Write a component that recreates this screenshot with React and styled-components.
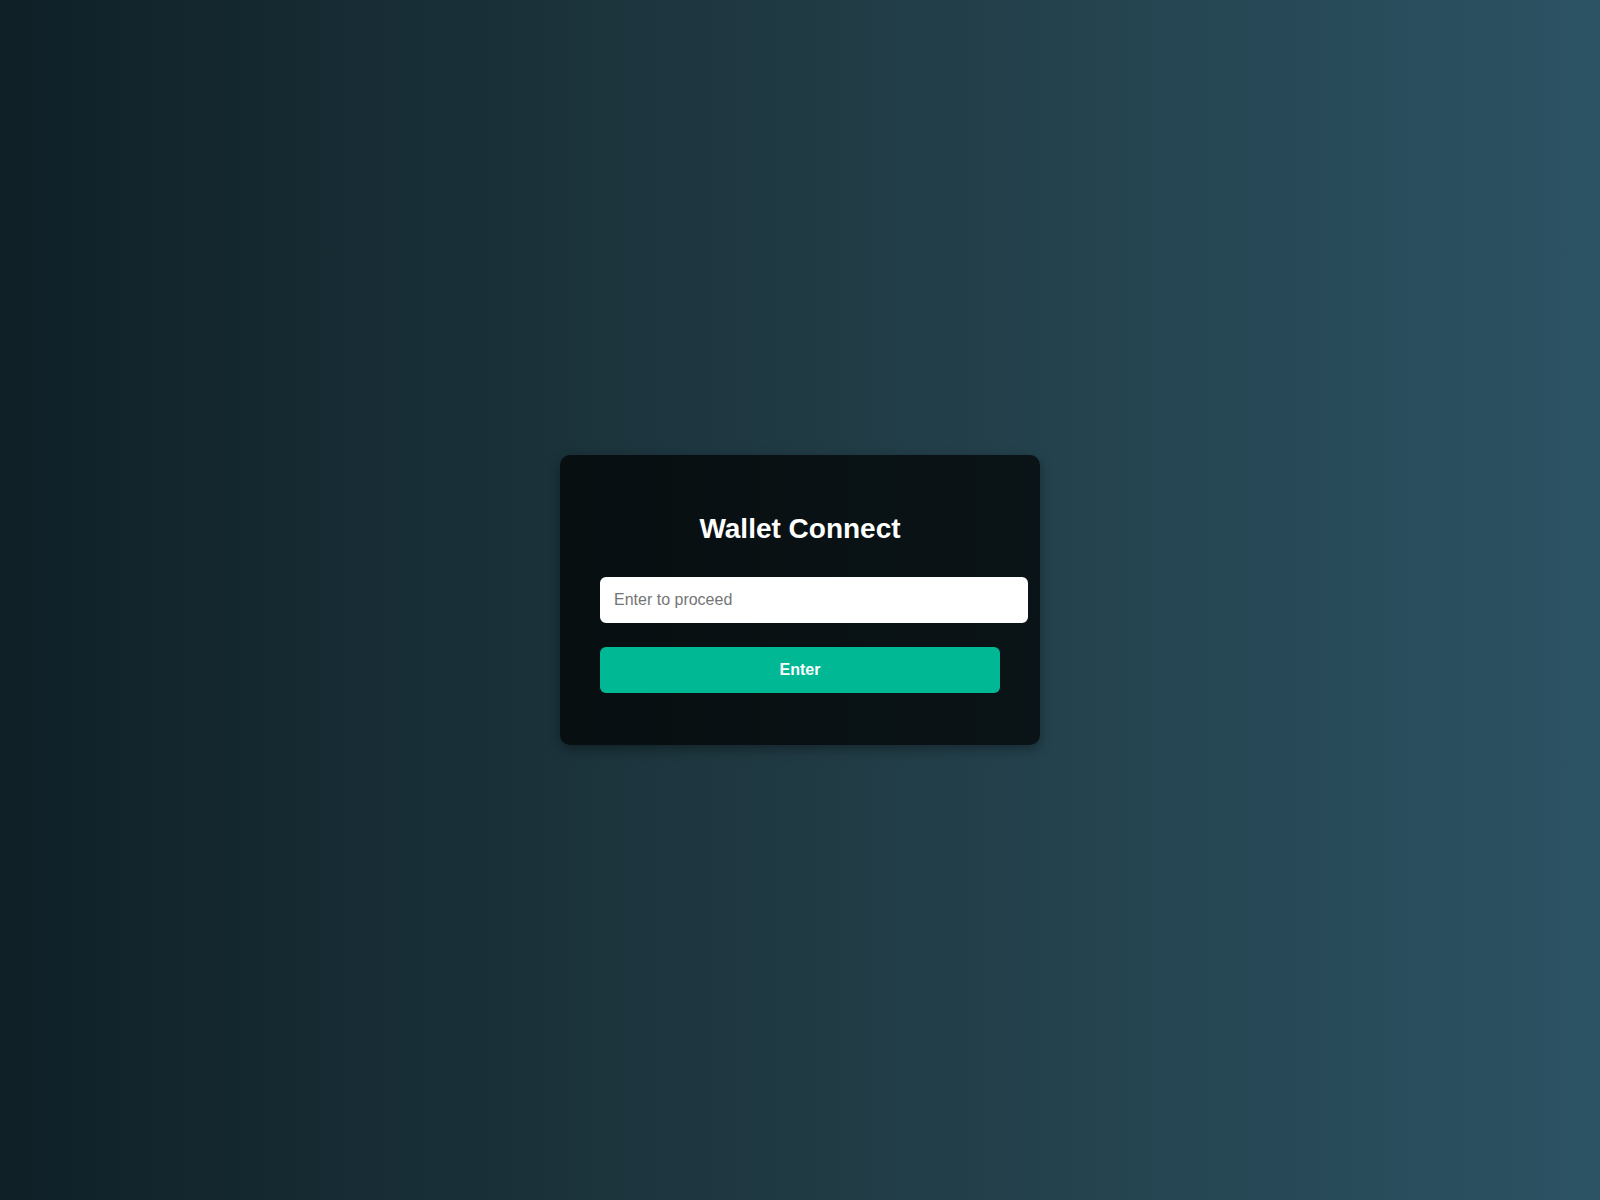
import React, { useState } from 'react';
import styled, { createGlobalStyle } from 'styled-components';

const GlobalStyle = createGlobalStyle`
  html, body, #root {
    margin: 0;
    height: 100%;
  }
  body {
    font-family: "Liberation Sans", Arial, sans-serif;
  }
`;

const Page = styled.div`
  min-height: 100vh;
  display: flex;
  align-items: center;
  justify-content: center;
  background: linear-gradient(to right, #0f2027, #203a43, #2c5364);
`;

const Card = styled.div`
  width: 400px;
  padding: 58px 40px 52px;
  background: rgba(0, 0, 0, 0.7);
  border-radius: 10px;
  box-shadow: 0 4px 12px rgba(0, 0, 0, 0.35);
  display: flex;
  flex-direction: column;
  align-items: stretch;
`;

const Title = styled.h2`
  margin: 0 0 32px;
  color: #ffffff;
  font-size: 28px;
  font-weight: 700;
  text-align: center;
`;

const Input = styled.input`
  width: 100%;
  box-sizing: content-box;
  padding: 12px;
  border: 2px solid #ffffff;
  border-radius: 6px;
  background: #ffffff;
  font-family: "Liberation Sans", Arial, sans-serif;
  font-size: 16px;
  line-height: 18px;
  color: #222;
  outline: none;

  &::placeholder {
    color: #757575;
  }
`;

const Button = styled.button`
  margin-top: 24px;
  height: 46px;
  border: none;
  border-radius: 6px;
  background: #00b894;
  color: #ffffff;
  font-family: "Liberation Sans", Arial, sans-serif;
  font-size: 16px;
  font-weight: 700;
  cursor: pointer;
`;

const App = () => {
    const [value, setValue] = useState('');

    return (
        <>
            <GlobalStyle />
            <Page>
                <Card>
                    <Title>Wallet Connect</Title>
                    <Input
                        type="text"
                        placeholder="Enter to proceed"
                        value={value}
                        onChange={(e) => setValue(e.target.value)}
                    />
                    <Button>Enter</Button>
                </Card>
            </Page>
        </>
    );
};

export default App;
